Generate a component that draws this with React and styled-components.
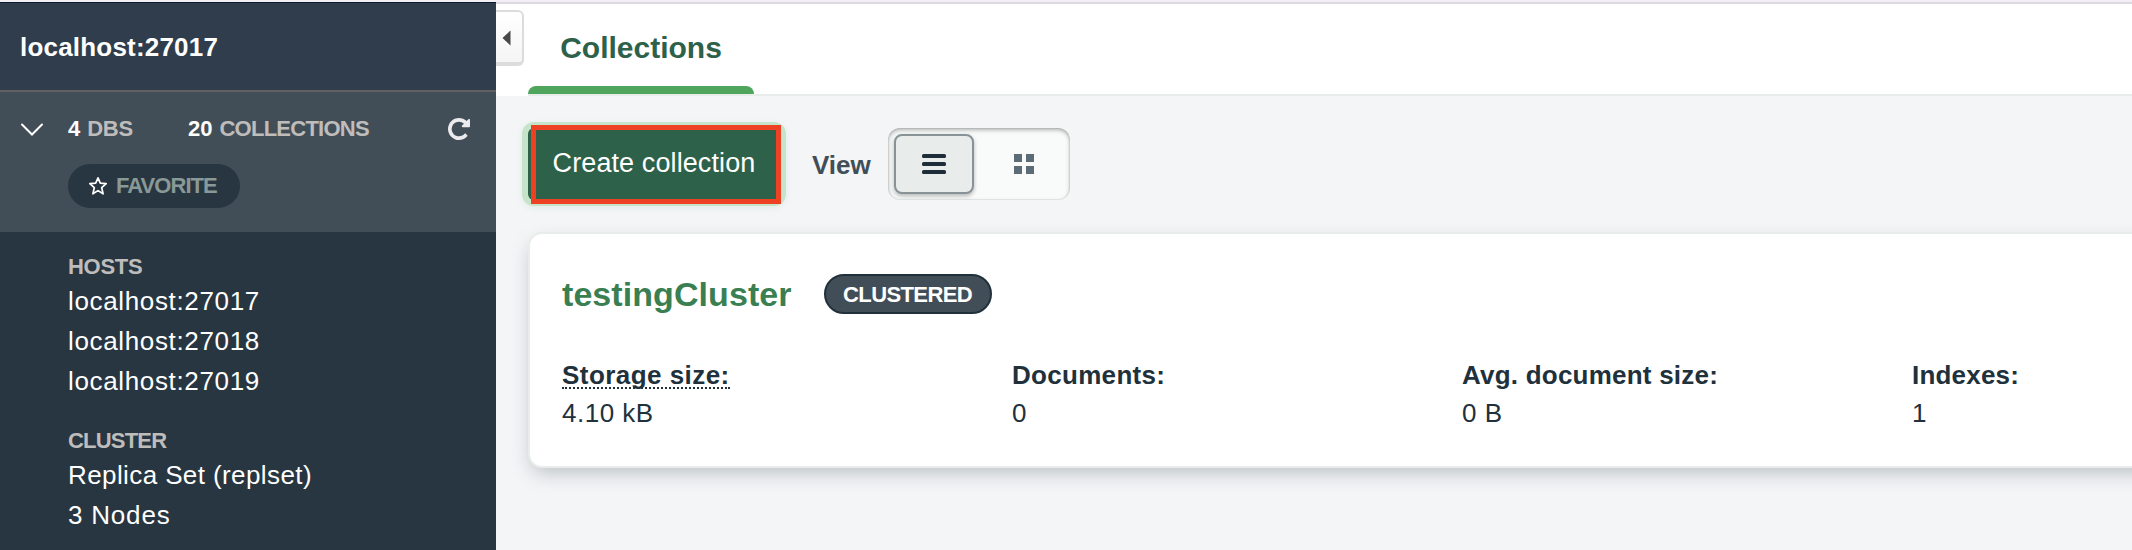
import React from 'react';
import styled, { createGlobalStyle } from 'styled-components';

const GlobalStyle = createGlobalStyle`
  * { box-sizing: border-box; }
  html, body, #root { height: 100%; }
  body {
    margin: 0;
    overflow: hidden;
    font-family: "Liberation Sans", Arial, sans-serif;
    color: #21313c;
  }
  button { font: inherit; border: 0; padding: 0; margin: 0; background: none; }
`;

const Window = styled.div`
  display: flex;
  height: 550px;
  width: 100%;
  overflow: hidden;
  border-top: 2px solid #f4eff7;
`;

const Sidebar = styled.aside`
  width: 496px;
  flex: none;
  background: #283641;
  color: #fff;
`;

const ConnectionTitle = styled.header`
  display: flex;
  align-items: flex-start;
  height: 90px;
  padding: 27px 20px 0;
  border-top: 1px solid #0b1b2e;
  border-bottom: 2px solid #635f63;
  background: #2f3d4c;
  font-size: 26px;
  line-height: 34px;
  font-weight: bold;
  letter-spacing: 0.2px;
`;

const Summary = styled.section`
  height: 140px;
  padding: 29px 26px 0 20px;
  background: #424e57;
`;

const StatsRow = styled.div`
  display: flex;
  align-items: center;
  height: 16px;
  font-size: 22px;
  line-height: 16px;
  font-weight: bold;
`;

const ToggleIcon = styled.svg`
  width: 24px;
  height: 16px;
  margin-right: 24px;
`;

const Stat = styled.span`
  display: flex;
  gap: 7px;
  width: ${(p) => p.$width}px;
`;

const StatName = styled.span`
  color: #bfbdbb;
  letter-spacing: ${(p) => p.$spacing || 0}px;
`;

const RefreshIcon = styled.svg`
  width: 22px;
  height: 22px;
  margin-left: auto;
`;

const FavoriteButton = styled.button`
  display: flex;
  align-items: center;
  gap: 8px;
  width: 172px;
  height: 44px;
  margin: 27px 0 0 48px;
  padding-left: 20px;
  border-radius: 22px;
  background: #283641;
  color: #889997;
  font-size: 22px;
  font-weight: bold;
  letter-spacing: -0.95px;
`;

const Details = styled.div`
  padding: 21px 0 0 68px;
`;

const DetailGroup = styled.section`
  margin-bottom: 26px;
`;

const DetailHeading = styled.h3`
  margin: 0;
  font-size: 22px;
  line-height: 28px;
  letter-spacing: ${(p) => p.$spacing}px;
  color: #bfbdbb;
`;

const DetailLine = styled.div`
  font-size: 26px;
  line-height: 40px;
  letter-spacing: ${(p) => p.$spacing || 0.4}px;
`;

const Main = styled.main`
  flex: 1;
  min-width: 0;
  display: flex;
  flex-direction: column;
  background: #f4f5f7;
`;

const TabBar = styled.nav`
  display: flex;
  height: 94px;
  border-top: 2px solid #dcdade;
  background: #fff;
`;

const CollapseButton = styled.button`
  flex: none;
  display: flex;
  align-items: center;
  width: 28px;
  height: 56px;
  margin: 6px 4px 0 0;
  padding: 2px 0 0 6px;
  border: 2px solid #dcdcdc;
  border-left: 0;
  border-bottom-width: 4px;
  border-radius: 0 6px 6px 0;
  background: linear-gradient(#fff, #f5f5f5);
`;

const Tabs = styled.div`
  flex: 1;
  border-bottom: 2px solid #e8edeb;
`;

const Tab = styled.button`
  position: relative;
  display: flex;
  align-items: flex-start;
  justify-content: center;
  width: 226px;
  height: 90px;
  padding-top: 29px;
  font-size: 30px;
  font-weight: bold;
  line-height: 30px;
  color: #2d614a;

  &::after {
    content: "";
    position: absolute;
    left: 0;
    right: 0;
    bottom: 0;
    height: 8px;
    border-radius: 8px 8px 0 0;
    background: #50a55d;
  }
`;

const Toolbar = styled.div`
  display: flex;
  align-items: center;
  height: 136px;
  padding: 0 0 0 32px;
`;

const CreateButton = styled.button`
  position: relative;
  width: 252px;
  height: 72px;
  border-radius: 6px;
  background: #2d614a;
  box-shadow: 0 0 0 6px #c6e4ca, 0 2px 8px 5px rgba(80, 165, 93, 0.12);
  color: #fff;
  font-size: 27px;
  letter-spacing: 0.1px;
  line-height: 70px;
  padding-bottom: 2px;
`;

const Highlight = styled.span`
  position: absolute;
  left: 3px;
  top: -3px;
  width: 250px;
  height: 79px;
  border: 5px solid #ee4023;
`;

const ViewLabel = styled.span`
  margin: 2px 17px 0 32px;
  font-size: 26px;
  font-weight: bold;
  color: #424e57;
`;

const Segmented = styled.div`
  display: flex;
  gap: 10px;
  width: 182px;
  height: 72px;
  padding: 6px;
  border-radius: 12px;
  background: #f9fbfa;
  box-shadow: inset 0 2px 4px rgba(0, 0, 0, 0.3), inset 0 0 0 1px #e8edeb;
`;

const Segment = styled.button`
  display: flex;
  align-items: center;
  justify-content: center;
  flex: none;
  width: 80px;
  height: 60px;
  border-radius: 8px;
  border: 2px solid ${(p) => (p.$active ? '#889397' : 'transparent')};
  background: ${(p) => (p.$active ? '#e8edeb' : 'transparent')};
  box-shadow: ${(p) => (p.$active ? '0 2px 4px rgba(0, 0, 0, 0.28)' : 'none')};
`;

const Card = styled.article`
  flex: none;
  width: 1828px;
  height: 236px;
  margin-left: 32px;
  padding: 40px 32px 0;
  border: 2px solid #e8edeb;
  border-radius: 14px;
  background: #fff;
  box-shadow: 0 8px 20px -4px rgba(6, 22, 33, 0.25);
`;

const CardHeader = styled.div`
  display: flex;
  align-items: center;
  height: 40px;
`;

const CollectionName = styled.h2`
  margin: 0 32px 0 0;
  font-size: 34px;
  line-height: 40px;
  letter-spacing: 0.07px;
  color: #3a7f52;
`;

const Badge = styled.span`
  width: 168px;
  height: 40px;
  border: 2px solid #21313c;
  border-radius: 20px;
  background: #424e57;
  color: #fff;
  font-size: 22px;
  font-weight: bold;
  line-height: 37px;
  letter-spacing: -0.6px;
  text-align: center;
`;

const Properties = styled.dl`
  display: flex;
  margin: 42px 0 0;
`;

const Property = styled.div`
  flex: none;
  width: 450px;
  font-size: 26px;
`;

const PropertyLabel = styled.dt`
  width: max-content;
  height: 33px;
  line-height: 38px;
  font-weight: bold;
  letter-spacing: ${(p) => p.$spacing}px;
  border-bottom: 2px dotted ${(p) => (p.$hint ? '#21313c' : 'transparent')};
`;

const PropertyValue = styled.dd`
  margin: 4px 0 0;
  line-height: 40px;
  letter-spacing: 0.5px;
`;

const properties = [
  { label: 'Storage size:', value: '4.10 kB', hint: true, spacing: 0.45 },
  { label: 'Documents:', value: '0', spacing: 0.3 },
  { label: 'Avg. document size:', value: '0 B', spacing: 0.22 },
  { label: 'Indexes:', value: '1', spacing: 0.2 },
];

export default function App() {
  return (
    <>
      <GlobalStyle />
      <Window>
        <Sidebar>
          <ConnectionTitle>localhost:27017</ConnectionTitle>
          <Summary>
            <StatsRow>
              <ToggleIcon viewBox="0 0 24 16" fill="none" stroke="#fff" strokeWidth="2" strokeLinecap="round">
                <path d="M2 3.500 12 13.500 22 3.500" />
              </ToggleIcon>
              <Stat $width={120}>
                <span>4</span>
                <StatName $spacing={-0.3}>DBS</StatName>
              </Stat>
              <Stat $width={190}>
                <span>20</span>
                <StatName $spacing={-0.75}>COLLECTIONS</StatName>
              </Stat>
              <RefreshIcon viewBox="0 0 1536 1536" fill="#ebebed">
                <path d="M1536 128v448q0 26-19 45t-45 19h-448q-42 0-59-40-17-39 14-69l138-138Q969 256 768 256q-104 0-198.500 40.500T406 406 296.500 569.500 256 768t40.500 198.500T406 1130t163.500 109.500T768 1280q119 0 225-52t179-147q7-10 23-12 15 0 25 9l137 138q9 8 9.500 20.500T1357 1259q-109 132-264 204.500T768 1536q-156 0-298-61t-245-164-164-245T0 768t61-298 164-245T470 61 768 0q147 0 284.500 55.500T1297 212l130-129q29-31 70-14 39 17 39 59z" />
              </RefreshIcon>
            </StatsRow>
            <FavoriteButton>
              <svg width="20" height="20" viewBox="0 0 20 20" fill="none" stroke="#fff" strokeWidth="1.7" strokeLinejoin="round">
                <path d="M10 1.800 12.300 7.200 18.200 7.700 13.700 11.700 15.100 17.800 10 14.600 4.900 17.800 6.300 11.700 1.800 7.700 7.700 7.200z" />
              </svg>
              FAVORITE
            </FavoriteButton>
          </Summary>
          <Details>
            <DetailGroup>
              <DetailHeading $spacing={-0.3}>HOSTS</DetailHeading>
              <DetailLine $spacing={0.65}>localhost:27017</DetailLine>
              <DetailLine $spacing={0.65}>localhost:27018</DetailLine>
              <DetailLine $spacing={0.65}>localhost:27019</DetailLine>
            </DetailGroup>
            <DetailGroup>
              <DetailHeading $spacing={-0.8}>CLUSTER</DetailHeading>
              <DetailLine>Replica Set (replset)</DetailLine>
              <DetailLine $spacing={0.8}>3 Nodes</DetailLine>
            </DetailGroup>
          </Details>
        </Sidebar>
        <Main>
          <TabBar>
            <CollapseButton aria-label="Collapse sidebar">
              <svg width="10" height="16" viewBox="0 0 10 16" fill="#494747">
                <path d="M8.500 0.500v15L0.500 8z" />
              </svg>
            </CollapseButton>
            <Tabs>
              <Tab>Collections</Tab>
            </Tabs>
          </TabBar>
          <Toolbar>
            <CreateButton>
              Create collection
              <Highlight />
            </CreateButton>
            <ViewLabel>View</ViewLabel>
            <Segmented>
              <Segment $active aria-label="List view">
                <svg width="24" height="20" viewBox="0 0 24 20" fill="#1f2c3a">
                  <rect width="24" height="4" rx="1.500" />
                  <rect y="8" width="24" height="4" rx="1.500" />
                  <rect y="16" width="24" height="4" rx="1.500" />
                </svg>
              </Segment>
              <Segment aria-label="Grid view">
                <svg width="20" height="20" viewBox="0 0 20 20" fill="#5d6c74">
                  <path d="M0 0h8v8H0zM12 0h8v8h-8zM0 12h8v8H0zM12 12h8v8h-8z" />
                </svg>
              </Segment>
            </Segmented>
          </Toolbar>
          <Card>
            <CardHeader>
              <CollectionName>testingCluster</CollectionName>
              <Badge>CLUSTERED</Badge>
            </CardHeader>
            <Properties>
              {properties.map((p) => (
                <Property key={p.label}>
                  <PropertyLabel $hint={p.hint} $spacing={p.spacing}>{p.label}</PropertyLabel>
                  <PropertyValue>{p.value}</PropertyValue>
                </Property>
              ))}
            </Properties>
          </Card>
        </Main>
      </Window>
    </>
  );
}
